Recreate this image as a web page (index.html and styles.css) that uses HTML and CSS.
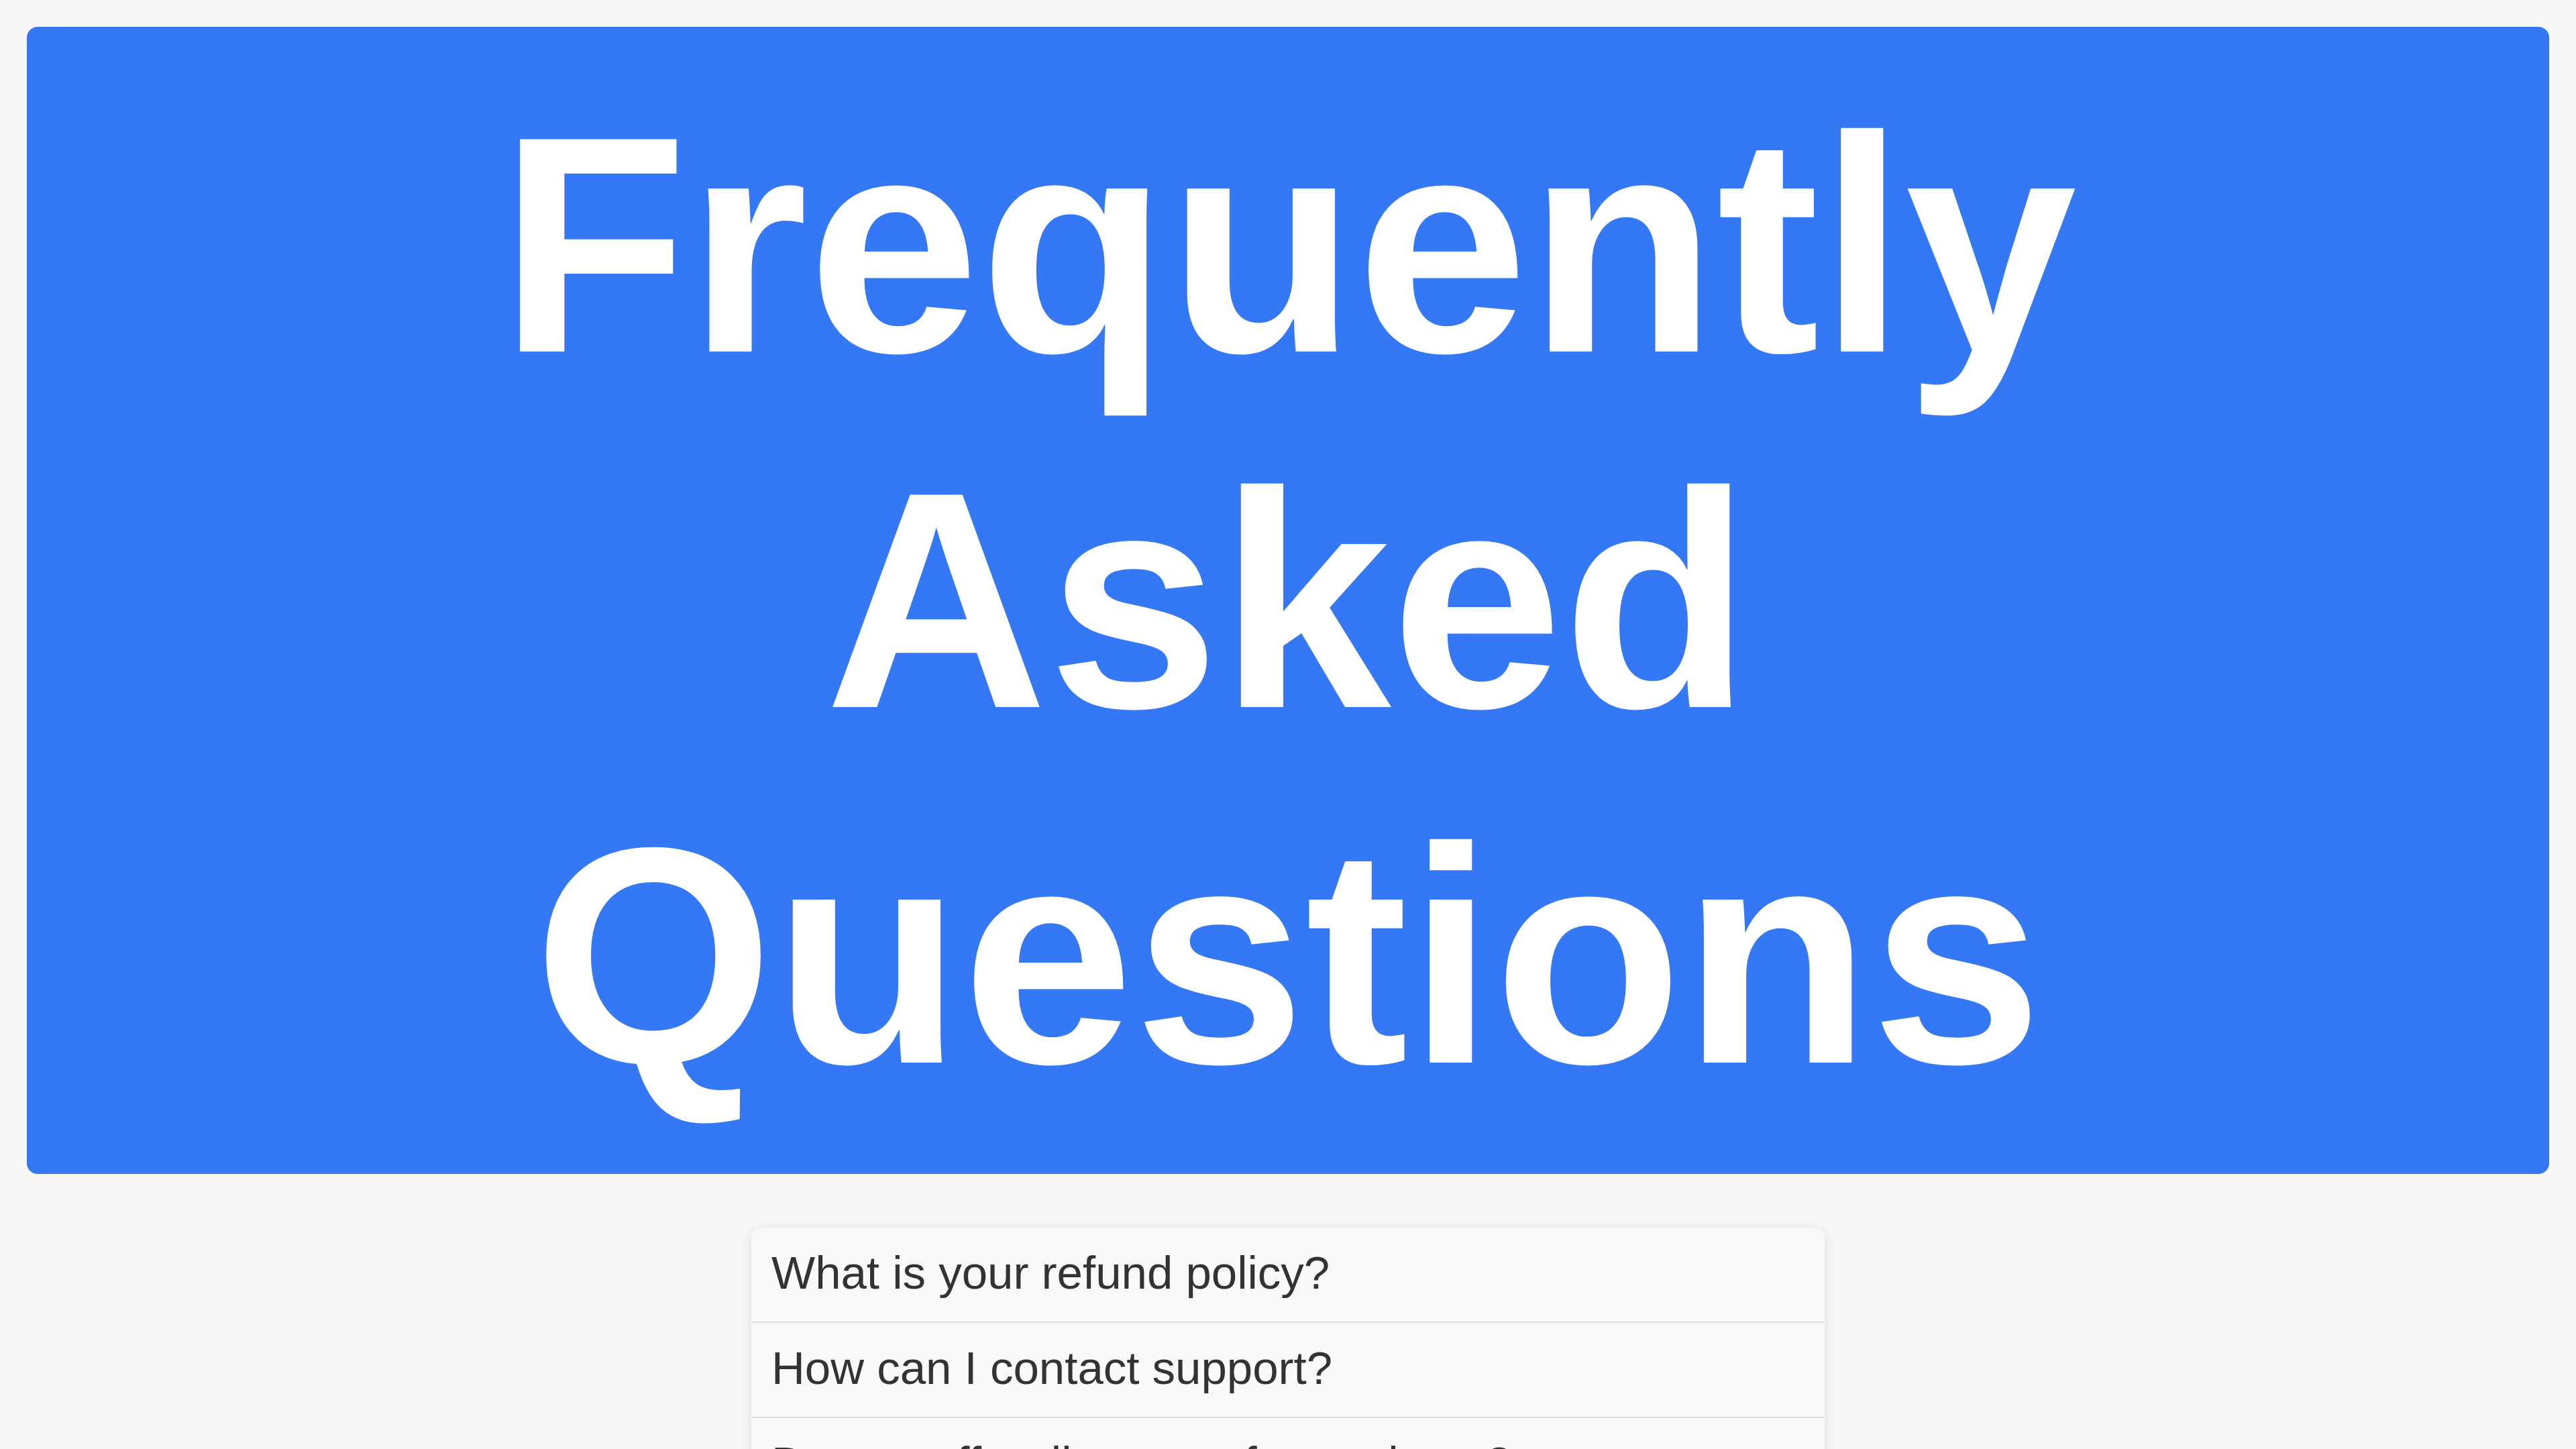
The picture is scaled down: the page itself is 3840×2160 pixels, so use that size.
FILE: index.html
```html
<!DOCTYPE html>
<html lang="en">
<head>
<meta charset="utf-8">
<title>Frequently Asked Questions</title>
<link rel="stylesheet" href="styles.css">
</head>
<body>
<header class="banner">
<h1 class="banner-title">Frequently<br>Asked<br>Questions</h1>
</header>
<main class="faq">
<button class="faq-question" type="button">What is your refund policy?</button>
<button class="faq-question" type="button">How can I contact support?</button>
<button class="faq-question" type="button">Do you offer discounts for students?</button>
</main>
</body>
</html>
```
FILE: styles.css
```css
html {
  scrollbar-width: none;
}

body {
  margin: 0;
  padding: 40px;
  background: #f7f7f7;
  color: #333;
  font-family: Arial, "Liberation Sans", sans-serif;
}

.banner {
  padding: 60px;
  border-radius: 16px;
  background: #3478f6;
  color: #fff;
  text-align: center;
}

.banner-title {
  margin: 0;
  font-size: 460px;
  font-weight: bold;
  line-height: 530px;
}

.faq {
  max-width: 1600px;
  margin: 80px auto 0;
  border-radius: 16px;
  background: #f9f9f9;
  box-shadow: 0 4px 20px rgba(0, 0, 0, 0.1);
  overflow: hidden;
}

.faq-question {
  display: block;
  width: 100%;
  padding: 28px 30px 32px;
  border: 0;
  border-bottom: 2px solid #e0e0e0;
  background: none;
  color: inherit;
  font: inherit;
  font-size: 69px;
  line-height: 80px;
  text-align: left;
  cursor: pointer;
}
```
